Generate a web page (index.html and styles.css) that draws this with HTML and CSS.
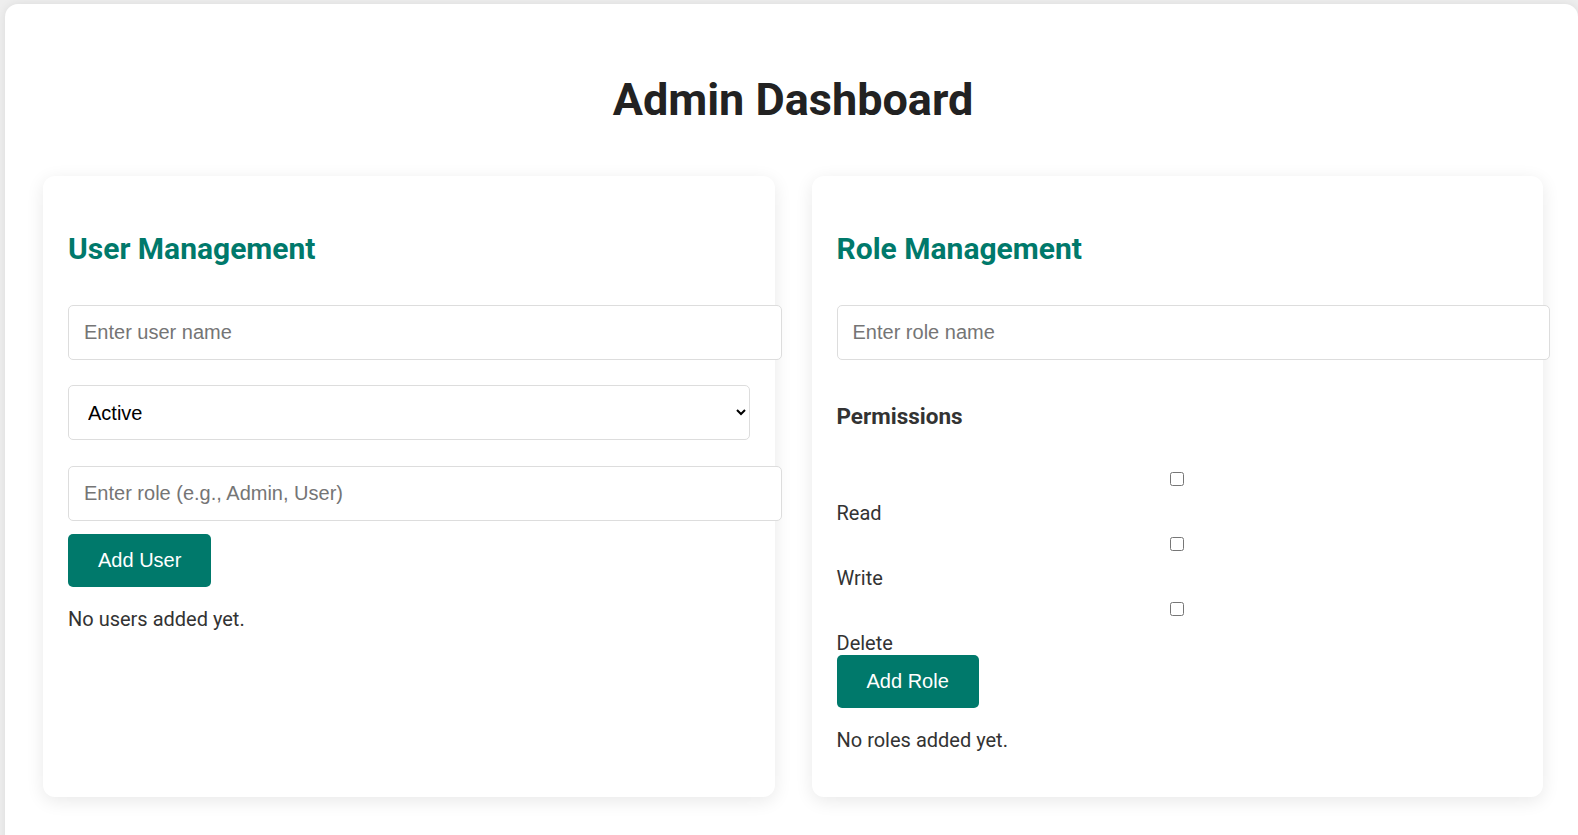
FILE: index.html
```html
<!DOCTYPE html>
<html lang="en">
<head>
<meta charset="utf-8">
<title>Admin Dashboard</title>
<link rel="stylesheet" href="styles.css">
</head>
<body>
<div class="container">
  <h1 class="title">Admin Dashboard</h1>
  <div class="grid">
    <section class="card">
      <h2 class="card-title">User Management</h2>
      <input class="field field-first" type="text" placeholder="Enter user name">
      <select class="select">
        <option>Active</option>
        <option>Inactive</option>
      </select>
      <input class="field field-role" type="text" placeholder="Enter role (e.g., Admin, User)">
      <button class="btn" type="button">Add User</button>
      <p class="empty">No users added yet.</p>
    </section>
    <section class="card">
      <h2 class="card-title">Role Management</h2>
      <input class="field field-first" type="text" placeholder="Enter role name">
      <h3 class="perm-title">Permissions</h3>
      <label class="perm">
        <span class="check-wrap"><input class="check" type="checkbox"></span>
        <span class="perm-text">Read</span>
      </label>
      <label class="perm">
        <span class="check-wrap"><input class="check" type="checkbox"></span>
        <span class="perm-text">Write</span>
      </label>
      <label class="perm">
        <span class="check-wrap"><input class="check" type="checkbox"></span>
        <span class="perm-text">Delete</span>
      </label>
      <button class="btn" type="button">Add Role</button>
      <p class="empty">No roles added yet.</p>
    </section>
  </div>
</div>
</body>
</html>
```

FILE: styles.css
```css
html, body {
  height: 100%;
  overflow: hidden;
}

body {
  margin: 0;
  padding: 4px 0 0 5px;
  background: #eeeeee;
  font-family: Roboto, "Liberation Sans", Arial, sans-serif;
  font-size: 20px;
  color: #333333;
}

.container {
  background: #ffffff;
  border-radius: 13px;
  box-shadow: 0 0 10px rgba(0, 0, 0, 0.08);
  padding: 69px 35px 60px 38px;
  min-height: 900px;
}

.title {
  margin: 0 0 50px;
  text-align: center;
  font-size: 45px;
  font-weight: 700;
  color: #222222;
  line-height: normal;
}

.grid {
  display: grid;
  grid-template-columns: 1fr 1fr;
  column-gap: 37px;
  align-items: stretch;
}

.card {
  background: #ffffff;
  border-radius: 12px;
  box-shadow: 0 4px 18px rgba(0, 0, 0, 0.09);
  padding: 25px;
}

.card-title {
  margin: 30px 0 0;
  font-size: 30px;
  font-weight: 700;
  color: #00796b;
  line-height: normal;
}

.field {
  display: block;
  box-sizing: content-box;
  width: 100%;
  height: 23px;
  padding: 15px;
  margin: 0;
  border: 1px solid #dddddd;
  border-radius: 5px;
  font-family: "Liberation Sans", Arial, sans-serif;
  font-size: 20px;
  color: #000000;
  background: #ffffff;
  outline: none;
}

.field::placeholder {
  color: #757575;
}

.field-first {
  margin-top: 39px;
}

.select {
  display: block;
  box-sizing: border-box;
  width: 100%;
  height: 55px;
  margin: 25px 0 0;
  padding: 0 15px;
  border: 1px solid #dddddd;
  border-radius: 5px;
  font-family: "Liberation Sans", Arial, sans-serif;
  font-size: 20px;
  color: #000000;
  background: #ffffff;
}

.field-role {
  margin-top: 26px;
}

.btn {
  display: block;
  margin: 13px 0 0;
  padding: 15px 30px;
  height: 53px;
  border: none;
  border-radius: 5px;
  background: #00796b;
  color: #ffffff;
  font-family: "Liberation Sans", Arial, sans-serif;
  font-size: 20px;
  line-height: 23px;
  cursor: pointer;
}

.empty {
  margin: 20px 0 20px;
  line-height: normal;
}

.perm-title {
  margin: 43px 0 0;
  font-size: 22.5px;
  font-weight: 700;
  color: #333333;
  line-height: normal;
}

.perm {
  display: block;
}

.check-wrap {
  display: flex;
  justify-content: center;
  margin-top: 12.5px;
  margin-bottom: 14.6px;
  height: 14px;
}

.perm:first-of-type .check-wrap {
  margin-top: 43px;
}

.check {
  margin: 0;
  width: 14px;
  height: 14px;
}

.perm-text {
  display: block;
  line-height: normal;
}

.perm + .btn {
  margin-top: 0;
}
```
